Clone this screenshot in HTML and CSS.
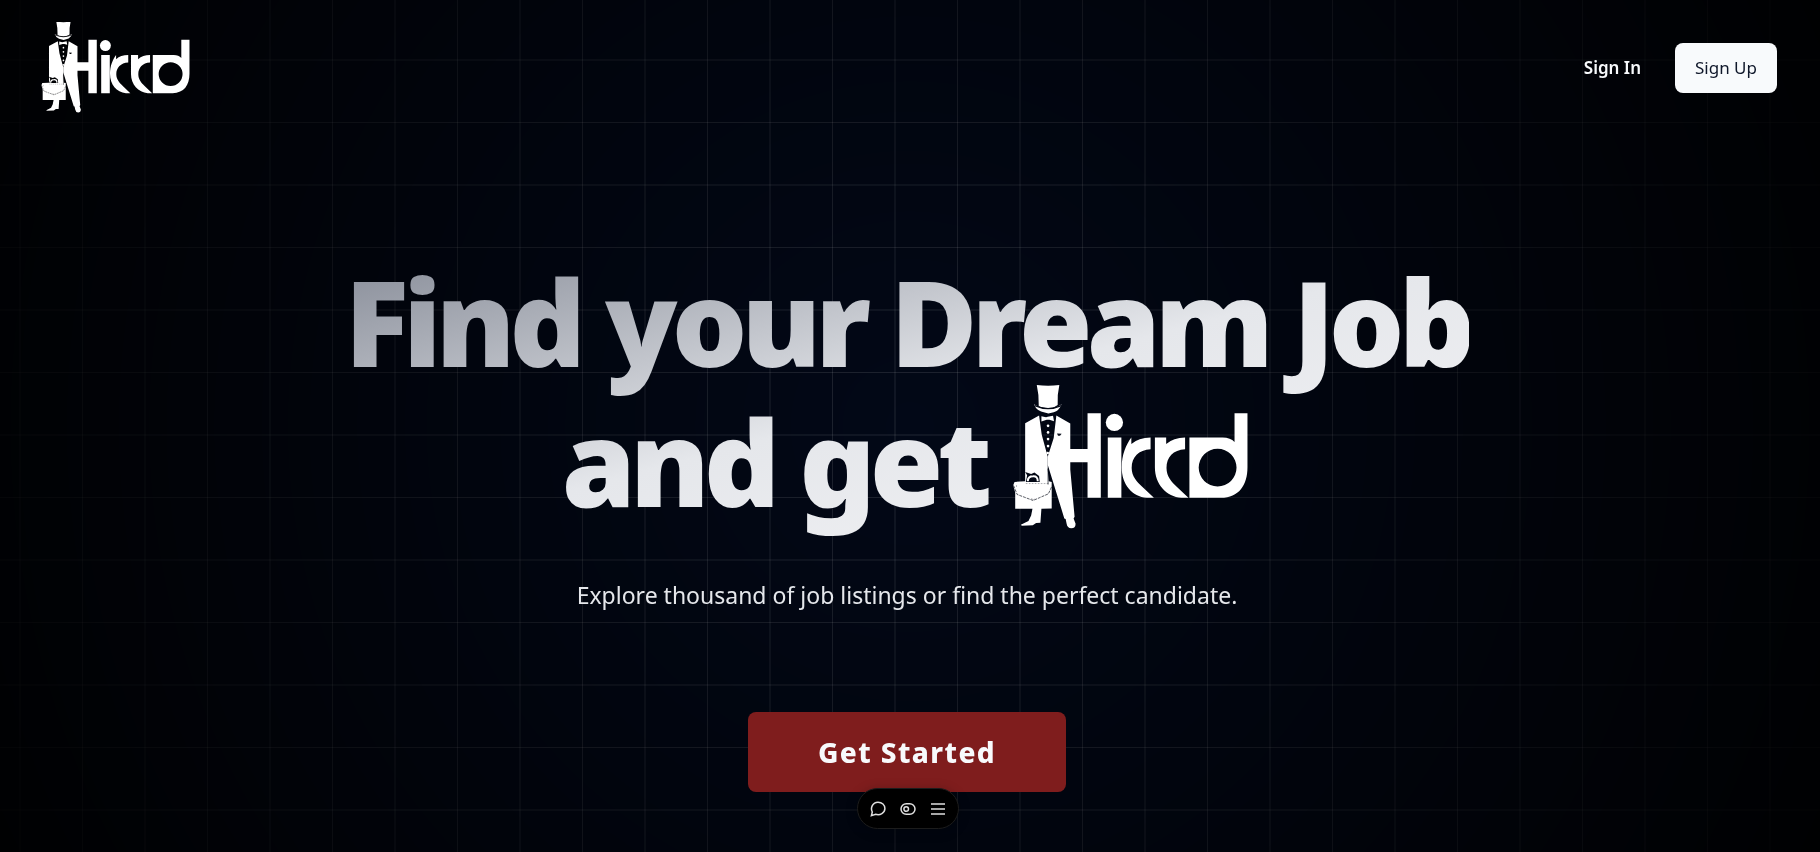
FILE: index.html
```html
<!DOCTYPE html>
<html lang="en">
<head>
<meta charset="utf-8">
<meta name="viewport" content="width=device-width, initial-scale=1">
<title>Hirrd</title>
<link rel="stylesheet" href="styles.css">
</head>
<body>
<svg class="defs" aria-hidden="true">
  <defs>
    <mask id="cutouts" maskUnits="userSpaceOnUse" x="0" y="0" width="720" height="440">
      <rect width="720" height="440" fill="#fff"/>
      <g fill="none" stroke="#000" stroke-width="2">
        <path d="M67 62 Q107 80 147 62" stroke-width="4"/>
        <path d="M3 303 L14 330 L62 348 L108 328 L119 304" stroke-dasharray="9 3"/>
        <path d="M57 341 L62 347 L68 341 M12 302 V310 M40 297 H110" stroke-width="1" stroke-dasharray="5 4"/>
        <path d="M107 252 V300" stroke-width="2"/>
      </g>
      <path d="M134 146 L148 147 L143 153 H137 Z"/>
      <path d="M38 262 L56 268 L66 264 L80 274 L82 292 H40 L44 272 Z"/>
    </mask>
    <symbol id="hirrd" viewBox="0 0 720 440">
      <g fill="#fff" mask="url(#cutouts)">
        <path d="M73 0 Q107 4 141 0 Q134 32 136 60 Q121 72 107 70 Q92 70 79 64 Q80 30 73 0Z"/>
        <path d="M65 58 Q107 86 148 58 Q140 78 124 82 L108 86 L86 80 Q70 74 65 58Z"/>
        <path d="M80 92 L88 150 L106 216 V255 L109 290 L118 292 L118 372 L87 373 L84 415 L71 416 L61 423 L28 424 L25 421 L48 410 L56 393 L60 373 H8 V324 L2 302 L6 292 L38 290 V115 Z"/>
        <path d="M132 92 L174 116 V193 H226 V85 H266 V340 H226 V233 H174 V255 L187 397 L184 402 L190 418 Q190 432 177 432 Q165 431 163 418 L160 404 L156 402 L106 240 V216 L124 160 Z"/>
        <path d="M87 94 L101 97 L106 96 L122 93 L125 109 L111 105 L103 105 L87 110 Z"/>
        <circle cx="107" cy="123" r="4"/><circle cx="107" cy="143" r="4"/><circle cx="107" cy="163" r="4"/><circle cx="107" cy="184" r="4"/><circle cx="106" cy="205" r="4"/>
        <circle cx="307" cy="113" r="26"/>
        <path d="M287 158 H328 V340 H287Z"/>
        <path d="M358 158 V178 Q380 158 416 158 V194 C380 196 359 218 359 250 C359 276 376 292 390 306 L426 340 H405 C360 337 329 300 329 248 C329 210 342 180 358 158Z"/>
        <path d="M429 158 H463 V178 Q485 158 520 158 V194 C484 196 464 218 464 250 C464 276 480 292 494 306 L530 340 H509 C464 337 429 300 429 248Z"/>
        <path fill-rule="evenodd" d="M533 158 H633 Q657 158 669 172 V85 H708 V248 C708 302 682 340 628 340 H533Z M618 192 A57 57 0 1 0 618 306 A57 57 0 1 0 618 192Z"/>
      </g>
      <path d="M46 290 Q46 275 62 275 Q76 274 76 290" fill="none" stroke="#fff" stroke-width="6"/>
    </symbol>
  </defs>
</svg>
<div class="page">
  <header class="nav">
    <a href="#" aria-label="Hirrd home"><svg class="logo"><use href="#hirrd"/></svg></a>
    <nav class="actions">
      <a class="signin" href="#">Sign In</a>
      <button class="signup" type="button">Sign Up</button>
    </nav>
  </header>
  <main class="hero">
    <h1 class="title">
      <span>Find your Dream Job</span>
      <span class="second">and get <svg class="mark" role="img" aria-label="Hirrd"><use href="#hirrd"/></svg></span>
    </h1>
    <p class="lead">Explore thousand of job listings or find the perfect candidate.</p>
    <button class="cta" type="button">Get Started</button>
  </main>
</div>
<div class="toolbar">
  <button type="button" aria-label="Comments"><svg viewBox="0 0 16 16"><path d="M1.4 14.6 L2.3 11 C.2 7 2.5 1.2 8 1.2 C12 1.2 14.9 4 14.9 7.6 C14.9 12 10 14.8 5.6 13.3Z"/></svg></button>
  <button type="button" aria-label="Preview"><svg viewBox="0 0 16 16"><rect x="1" y="2.7" width="14" height="10.6" rx="5.3"/><circle cx="6.2" cy="8" r="2.3"/></svg></button>
  <button type="button" aria-label="Menu"><svg viewBox="0 0 16 16"><path d="M1 3H15M1 8H15M1 13H15"/></svg></button>
</div>
</body>
</html>
```
FILE: styles.css
```css
* { box-sizing: border-box; }
body {
  margin: 0;
  min-height: 100vh;
  background: #000;
  color: #f8fafc;
  font-family: "Noto Sans", "Open Sans", sans-serif;
  overflow: hidden;
}
body::before {
  content: "";
  position: fixed;
  inset: 0;
  z-index: -1;
  background:
    linear-gradient(90deg, rgba(255,255,255,.11) 1px, transparent 1px) 82px 0 / 125px 125px,
    linear-gradient(90deg, rgba(255,255,255,.06) 2px, transparent 2px) 19px 0 / 125px 125px,
    linear-gradient(rgba(255,255,255,.11) 1px, transparent 1px) 0 122px / 125px 125px,
    linear-gradient(rgba(255,255,255,.06) 2px, transparent 2px) 0 59px / 125px 125px,
    #020817;
  -webkit-mask-image: radial-gradient(circle at center, #000, transparent 110%);
  mask-image: radial-gradient(circle at center, #000, transparent 110%);
}
button { border: 0; font: inherit; cursor: pointer; }
.defs { position: absolute; width: 0; height: 0; }
.nav {
  display: flex;
  align-items: center;
  justify-content: space-between;
  padding: 21px 43px 20px 41px;
}
.nav a { color: inherit; text-decoration: none; }
.logo { display: block; width: 151px; height: 94px; }
.actions { display: flex; align-items: center; gap: 34px; }
.nav .signin, .signup { font-size: 17px; line-height: 24px; }
.signin { font-weight: 600; }
.signup {
  padding: 13px 20px;
  border-radius: 8px;
  background: #f8fafc;
  color: #0f172a;
}
.hero {
  display: flex;
  flex-direction: column;
  align-items: center;
  padding: 116px 6px 0 0;
  text-align: center;
}
.title {
  display: flex;
  flex-direction: column;
  align-items: center;
  margin: 0;
  padding-bottom: 20px;
  font-size: 119px;
  line-height: 140px;
  font-weight: 900;
  letter-spacing: -0.05em;
  color: transparent;
  background: linear-gradient(to bottom right, #868b97, #e5e7eb 50%, #f4f4f6);
  -webkit-background-clip: text;
  background-clip: text;
}
.second { display: flex; align-items: center; gap: 26px; }
.mark { width: 240px; height: 146px; margin-top: -6px; }
.lead { margin: 26px 0 0; font-size: 23px; line-height: 36px; color: #e5e7eb; }
.cta {
  margin-top: 99px;
  padding: 0 70px;
  height: 80px;
  border-radius: 8px;
  background: #7f1d1d;
  color: #f8fafc;
  font-size: 28px;
  font-weight: 800;
  letter-spacing: 0.05em;
}
.toolbar {
  position: fixed;
  bottom: 23px;
  left: calc(50% - 2px);
  transform: translateX(-50%);
  display: flex;
  align-items: center;
  gap: 14px;
  height: 41px;
  padding: 0 12px;
  border: 1px solid #1c1c1c;
  border-radius: 21px;
  background: #000;
  box-shadow: 0 2px 12px rgba(0,0,0,.25);
}
.toolbar button { display: flex; padding: 0; background: none; color: #e0e0e0; }
.toolbar svg { width: 16px; height: 16px; fill: none; stroke: currentColor; stroke-width: 1.5; }
```
